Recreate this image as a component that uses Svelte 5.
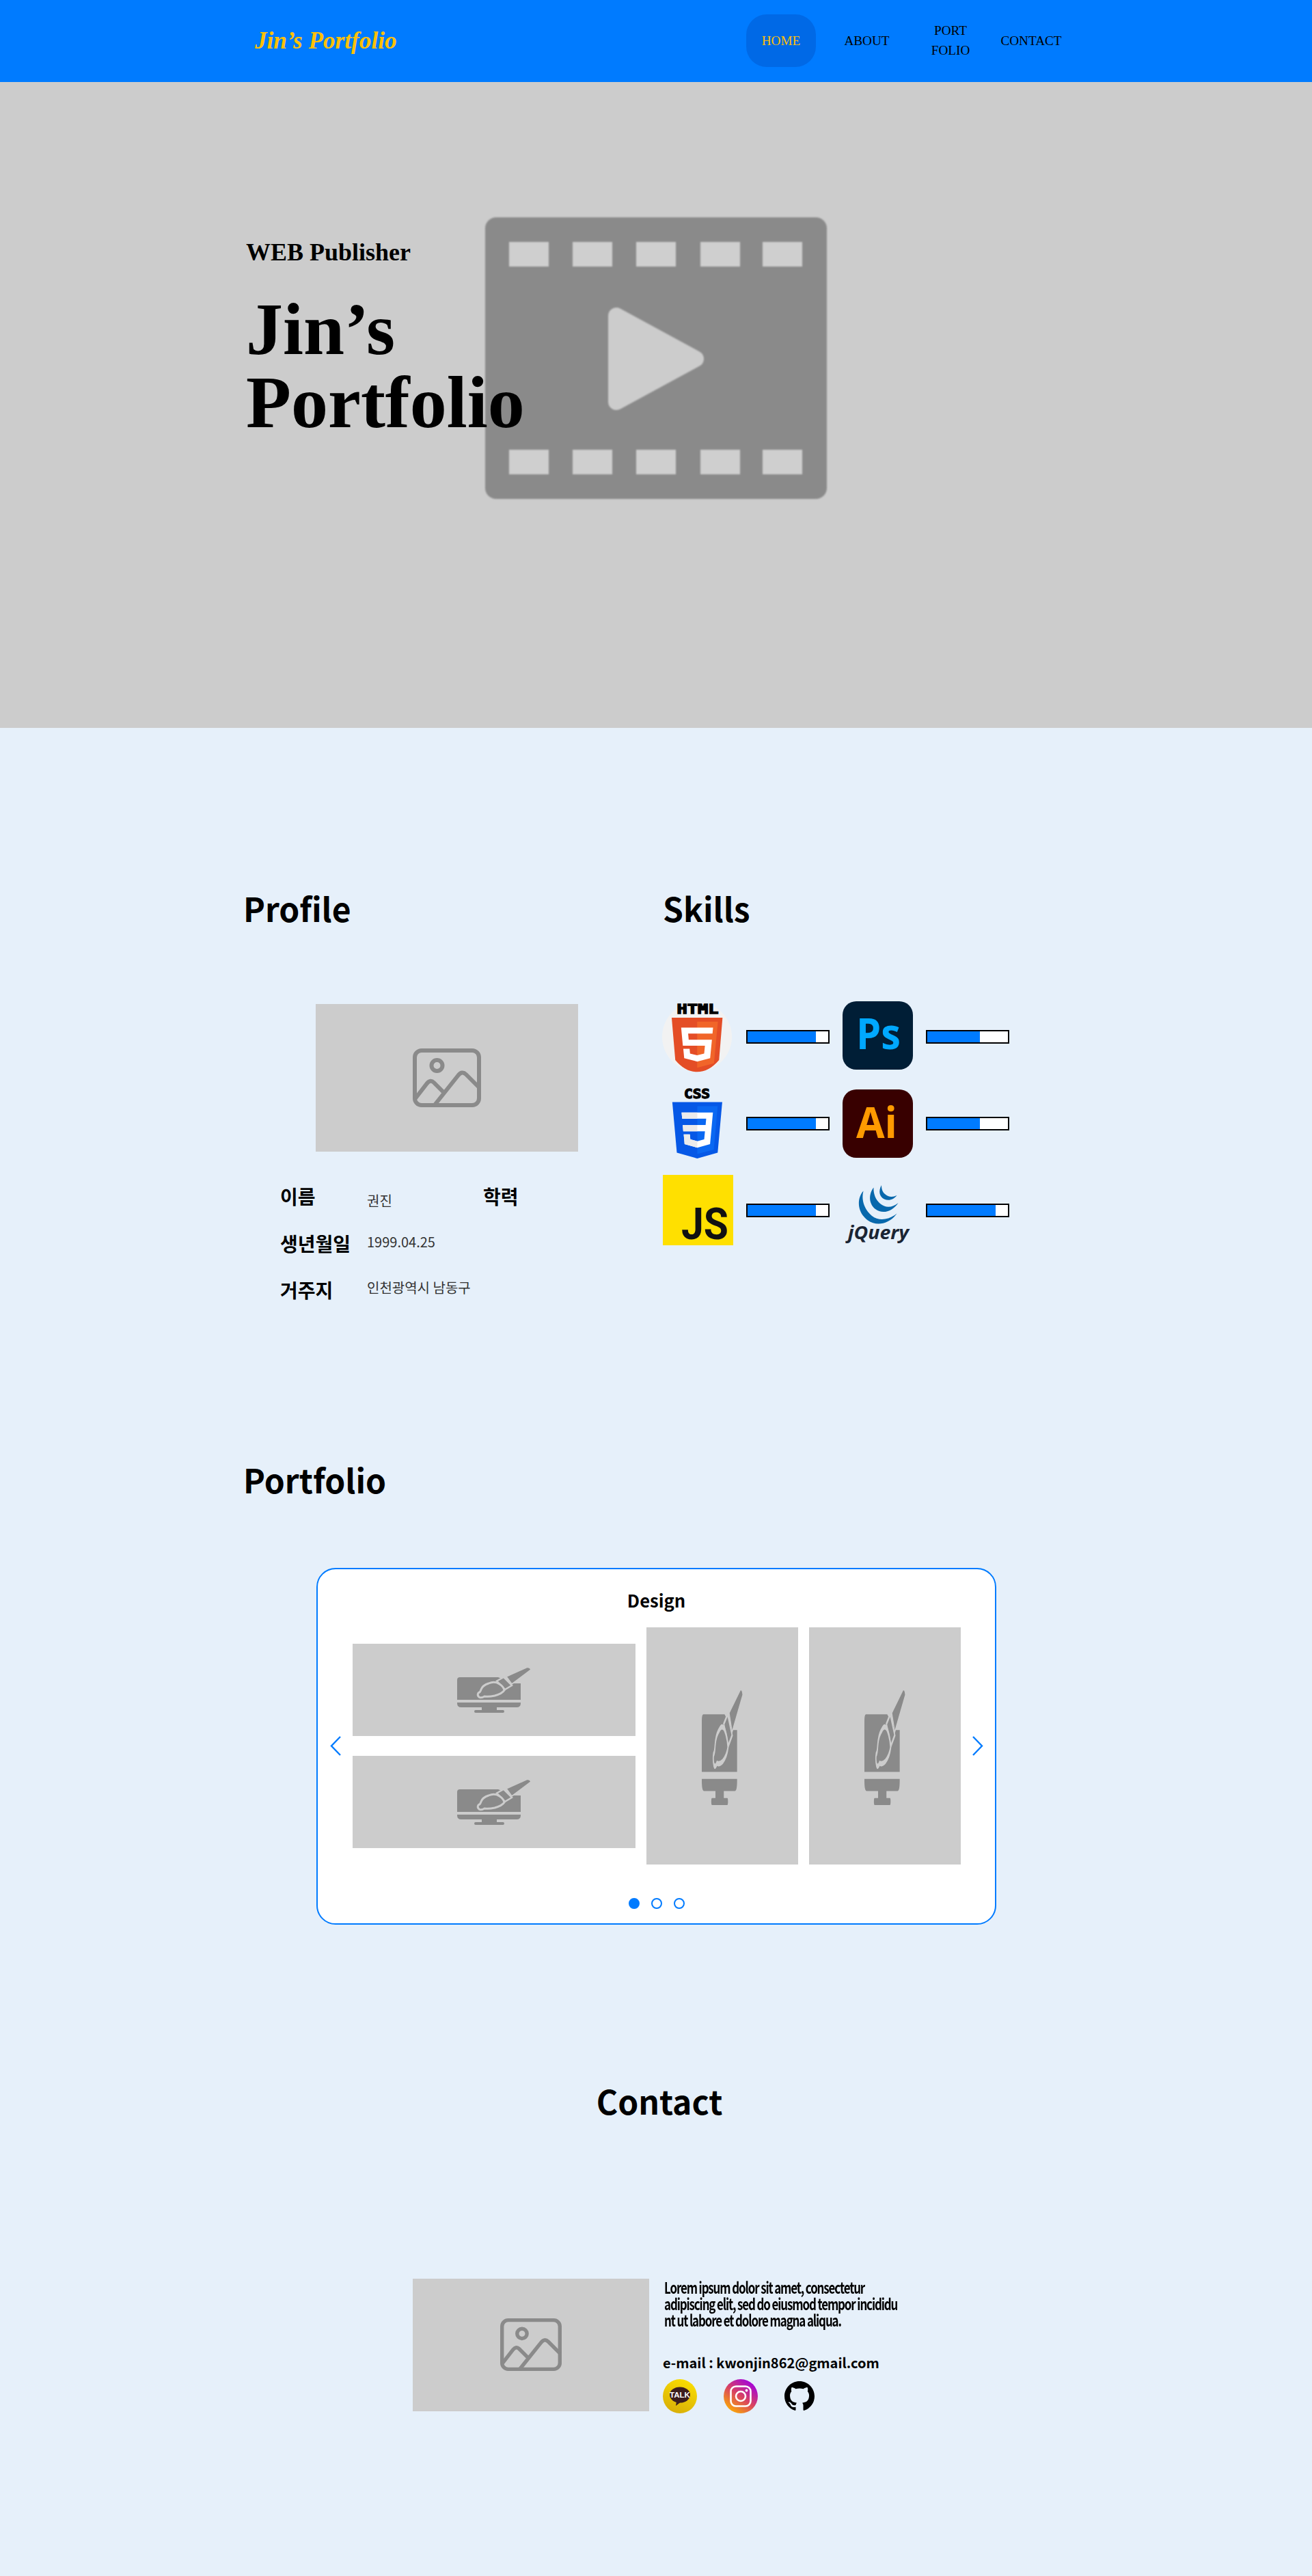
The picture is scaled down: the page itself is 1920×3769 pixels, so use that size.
<script>
  const profileRows = [
    { label: '이름', value: '권진', cls: 'first' },
    { label: '생년월일', value: '1999.04.25', cls: '' },
    { label: '거주지', value: '인천광역시 남동구', cls: 'last' }
  ];
</script>

{#snippet bar(pct)}
  <div class="bar"><div class="fill" style="width: {pct}%"></div></div>
{/snippet}

{#snippet picture(cls)}
  <svg class={cls} viewBox="0 0 100 86" preserveAspectRatio="none" fill="none" stroke="#8a8a8a" stroke-width="6">
    <rect x="3" y="3" width="94" height="80" rx="10" />
    <circle cx="35.5" cy="25" r="8" />
    <path d="M4 73 L21 51 Q26 45 31 50 L45 64" />
    <path d="M31 84 L66 40 Q72 32 78 38 L97 57" />
  </svg>
{/snippet}

{#snippet brush(cls)}
  <svg class={cls} viewBox="0 0 108 67" preserveAspectRatio="none">
    <path d="M4 15 H60 L82 24 H93 V48 H0 V19 Q0 15 4 15Z" fill="#8a8a8a" />
    <path d="M0 52 H93 V53 Q93 59 87 59 H58 V63 H67 Q69 63 69 65 Q69 67 67 67 H27 Q25 67 25 65 Q25 63 27 63 H36 V59 H6 Q0 59 0 53Z" fill="#8a8a8a" />
    <path d="M72 14 L102 0.5 Q107 0 108 4 L80 25Z" fill="#8a8a8a" stroke="#ccc" stroke-width="1.6" />
    <path d="M58 20.5 L68 15 L80 27 L70 33Z" fill="#8a8a8a" stroke="#ccc" stroke-width="2.4" />
    <path d="M32 44 Q29 41 31 38 Q34 37 35 33 Q37 27 46 24 Q55 20 62 25 Q68 29 69 34 Q66 39 55 42 Q46 44 40 43 Q35 46 32 44Z" fill="#8a8a8a" stroke="#ccc" stroke-width="3" />
  </svg>
{/snippet}

<div class="page">
  <header class="header">
    <a class="logo" href="#home">Jin’s Portfolio</a>
    <nav class="nav">
      <a class="active" href="#home">HOME</a>
      <a href="#about">ABOUT</a>
      <a href="#portfolio">PORT<br />FOLIO</a>
      <a href="#contact">CONTACT</a>
    </nav>
  </header>

  <section class="hero" id="home">
    <svg class="film" viewBox="0 0 500 412">
      <rect width="500" height="412" rx="16" fill="#8a8a8a" />
      <g fill="#cfcfcf">
        {#each [35, 128, 221, 315, 406] as x}
          <rect {x} y="36" width="58" height="36" />
          <rect {x} y="340" width="58" height="36" />
        {/each}
      </g>
      <polygon points="192,144 192,270 308,207" fill="#ccc" stroke="#ccc" stroke-width="24" stroke-linejoin="round" />
    </svg>
    <div class="hero-text">
      <p class="sub">WEB Publisher</p>
      <h1>Jin’s<br />Portfolio</h1>
    </div>
  </section>

  <main class="main">
    <div class="about" id="about">
      <section class="profile">
        <h2>Profile</h2>
        <div class="photo">{@render picture('pic-lg')}</div>
        <div class="info">
          {#each profileRows as row, i}
            <div class="key">{row.label}</div>
            <div class="val {row.cls}">{row.value}</div>
            <div class="key">{i === 0 ? '학력' : ''}</div>
          {/each}
        </div>
      </section>

      <section class="skills">
        <h2>Skills</h2>
        <div class="skill-grid">
          <svg class="logo-icon" viewBox="0 0 103 103">
            <circle cx="51" cy="52" r="51" fill="#f2f2f2" />
            <text x="52" y="18" class="pix" font-size="19" textLength="61" lengthAdjust="spacingAndGlyphs">HTML</text>
            <g transform="translate(9 24) scale(0.165 0.155)">
              <path d="M30 0 H481 L450 400 Q360 512 255 512 Q150 512 62 400Z" fill="#e44d26" />
              <path d="M256 472 L405 431 440 37 H256Z" fill="#f16529" />
              <path d="M256 94 H114 L129 265 H325 L318 338 256 355 193 338 189 293 H133 L141 382 256 414 371 382 387 208 H181 L176 150 H392 L397 94Z" fill="#fff" />
            </g>
          </svg>
          {@render bar(85)}
          <svg class="logo-icon" viewBox="0 0 103 103">
            <rect width="103" height="100" rx="20" fill="#001e36" />
            <text x="20" y="70" class="adobe" fill="#00a8ff" font-size="62" textLength="65" lengthAdjust="spacingAndGlyphs">Ps</text>
          </svg>
          {@render bar(65)}

          <svg class="logo-icon" viewBox="0 0 103 103">
            <text x="51" y="14.5" class="pix" font-size="19" textLength="38" lengthAdjust="spacingAndGlyphs">CSS</text>
            <g transform="translate(10 20.5) scale(0.162 0.161)">
              <path d="M30 0 H481 L440 460 255 512 71 460Z" fill="#0658e6" />
              <path d="M256 472 L405 431 440 37 H256Z" fill="#0a68f2" />
              <path d="M114 94 H397 L371 382 256 414 141 382 133 293 H189 L193 338 256 355 318 338 325 265 H129 L124 208 H331 L336 150 H119Z" fill="#fff" />
              <path d="M114 94 H256 V150 H119Z M124 208 H256 V265 H129Z M133 293 H189 L193 338 256 355 V414 L141 382Z" fill="#ebebeb" />
            </g>
          </svg>
          {@render bar(85)}
          <svg class="logo-icon" viewBox="0 0 103 103">
            <rect y="2" width="103" height="100" rx="20" fill="#380000" />
            <text x="20" y="73" class="adobe" fill="#ff9a00" font-size="62" textLength="60" lengthAdjust="spacingAndGlyphs">Ai</text>
          </svg>
          {@render bar(65)}

          <svg class="logo-icon" viewBox="0 0 103 103">
            <rect x="1" width="103" height="103" fill="#ffe000" />
            <text x="28" y="94" class="js" font-size="65" textLength="69" lengthAdjust="spacingAndGlyphs">JS</text>
          </svg>
          {@render bar(85)}
          <svg class="logo-icon" viewBox="0 0 103 103">
            <g fill="#0868ac">
              <path d="M30.5 23.5 C21 34 21 53 35 65 C48 76 68 73 79.5 56.5 C68 66 53 68 43 60 C32 51 27 37 30.5 23.5Z" />
              <path d="M45.5 18.5 C38 28 38 42 48 50 C58 58 73 54 81.5 41 C73 48 63 49 55 42 C48 36 45 27 45.5 18.5Z" />
              <path d="M57 15 C52 24 54 32 61 35.5 C68 38.5 75 36 79.5 30 C73 33 67 32.5 62 28 C58 24.5 57 20 57 15Z" />
            </g>
            <text x="8" y="94" class="jq" font-size="26" textLength="89" lengthAdjust="spacingAndGlyphs">jQuery</text>
          </svg>
          {@render bar(85)}
        </div>
      </section>
    </div>

    <section class="portfolio" id="portfolio">
      <h2>Portfolio</h2>
      <div class="card">
        <h3>Design</h3>
        <div class="slider">
          <svg class="arrow" viewBox="0 0 17 29" fill="none" stroke="#007bff" stroke-width="2.4"><path d="M15 1 L2 14.5 L15 28" /></svg>
          <div class="tiles">
            <div class="wide-col">
              <div class="tile wide">{@render brush('brush-wide')}</div>
              <div class="tile wide">{@render brush('brush-wide')}</div>
            </div>
            <div class="tile tall">{@render brush('brush-tall')}</div>
            <div class="tile tall">{@render brush('brush-tall')}</div>
          </div>
          <svg class="arrow" viewBox="0 0 17 29" fill="none" stroke="#007bff" stroke-width="2.4"><path d="M2 1 L15 14.5 L2 28" /></svg>
        </div>
        <div class="dots">
          <span class="dot on"></span>
          <span class="dot"></span>
          <span class="dot"></span>
        </div>
      </div>
    </section>

    <section class="contact" id="contact">
      <h2>Contact</h2>
      <div class="contact-row">
        <div class="contact-pic">{@render picture('pic-md')}</div>
        <div class="contact-text">
          <p class="lorem">Lorem ipsum dolor sit amet, consectetur<br />adipiscing elit, sed do eiusmod tempor incididu<br />nt ut labore et dolore magna aliqua.</p>
          <p class="mail">e-mail : kwonjin862@gmail.com</p>
          <div class="social">
            <svg class="sns" viewBox="0 0 50 50">
              <defs>
                <linearGradient id="kk" x1="0.7" y1="0" x2="0.3" y2="1"><stop offset="0" stop-color="#fade00" /><stop offset="1" stop-color="#d8ae08" /></linearGradient>
              </defs>
              <circle cx="25" cy="25" r="25" fill="url(#kk)" />
              <ellipse cx="25" cy="23" rx="15" ry="11.5" fill="#3c1e1e" />
              <path d="M20 32 L19 39 L27 33Z" fill="#3c1e1e" />
              <text x="25" y="27" class="talk" font-size="11.5">TALK</text>
            </svg>
            <svg class="sns" viewBox="0 0 50 50">
              <defs>
                <linearGradient id="ig" x1="0.15" y1="0.95" x2="0.8" y2="0.05"><stop offset="0" stop-color="#fdb000" /><stop offset="0.5" stop-color="#d9455f" /><stop offset="1" stop-color="#a100e0" /></linearGradient>
              </defs>
              <circle cx="25" cy="25" r="25" fill="url(#ig)" />
              <rect x="10.5" y="10.5" width="29" height="29" rx="7.5" fill="none" stroke="#fff" stroke-width="2.6" />
              <circle cx="25" cy="25" r="7" fill="none" stroke="#fff" stroke-width="2.6" />
              <circle cx="33.5" cy="16.5" r="1.9" fill="#fff" />
            </svg>
            <svg class="gh" viewBox="0 0 16 16">
              <path fill="#000" d="M8 0C3.58 0 0 3.58 0 8c0 3.54 2.29 6.53 5.47 7.59.4.07.55-.17.55-.38 0-.19-.01-.82-.01-1.49-2.01.37-2.53-.49-2.69-.94-.09-.23-.48-.94-.82-1.13-.28-.15-.68-.52-.01-.53.63-.01 1.08.58 1.23.82.72 1.21 1.87.87 2.33.66.07-.52.28-.87.51-1.07-1.78-.2-3.64-.89-3.64-3.95 0-.87.31-1.59.82-2.15-.08-.2-.36-1.02.08-2.12 0 0 .67-.21 2.2.82.64-.18 1.32-.27 2-.27.68 0 1.36.09 2 .27 1.53-1.04 2.2-.82 2.2-.82.44 1.1.16 1.92.08 2.12.51.56.82 1.27.82 2.15 0 3.07-1.87 3.75-3.65 3.95.29.25.54.73.54 1.48 0 1.07-.01 1.93-.01 2.2 0 .21.15.46.55.38A8.013 8.013 0 0016 8c0-4.42-3.58-8-8-8z" />
            </svg>
          </div>
        </div>
      </div>
    </section>
  </main>
</div>

<style>
  :global(body) {
    margin: 0;
    background: #e6f0fa;
  }

  .page {
    font-family: "Noto Sans CJK KR", "Noto Sans", sans-serif;
    color: #000;
  }

  a {
    color: inherit;
    text-decoration: none;
  }

  .header {
    height: 120px;
    background: #007bff;
    display: flex;
    align-items: center;
    padding-left: 373px;
    font-family: "Liberation Serif", serif;
  }

  .logo {
    width: 207px;
    font-size: 35.2px;
    font-weight: 700;
    font-style: italic;
    color: #ffc107;
    white-space: nowrap;
  }

  .nav {
    display: grid;
    grid-template-columns: 102px 149px 96px 140px;
    margin-left: 512px;
    font-size: 19.2px;
    line-height: 29px;
    text-align: center;
    align-items: center;
    position: relative;
    top: -1px;
  }

  .nav .active {
    height: 77px;
    line-height: 77px;
    background: #0069e6;
    border-radius: 30px;
    color: #ffc107;
  }

  .hero {
    position: relative;
    height: 945px;
    background: #ccc;
    padding-left: 360px;
    box-sizing: border-box;
    font-family: "Liberation Serif", serif;
  }

  .film {
    position: absolute;
    left: 710px;
    top: 198px;
    width: 500px;
    height: 412px;
    filter: blur(1.2px);
  }

  .hero-text {
    position: relative;
    padding-top: 225px;
  }

  .sub {
    margin: 0;
    font-size: 36px;
    font-weight: 700;
    line-height: 48px;
  }

  h1 {
    margin: 35px 0 0;
    font-size: 108px;
    line-height: 107px;
    font-weight: 700;
  }

  .main {
    padding: 0 0 240px 360px;
  }

  h2 {
    margin: 0;
    font-size: 48px;
    line-height: 72px;
    font-weight: 700;
  }

  .about {
    display: grid;
    grid-template-columns: 609px 1fr;
    padding-top: 227px;
  }

  .profile h2,
  .portfolio h2 {
    margin-left: -4px;
  }

  .photo {
    width: 384px;
    height: 216px;
    margin: 105px 0 0 102px;
    background: #ccc;
    display: flex;
    align-items: center;
    justify-content: center;
  }

  .pic-lg {
    width: 100px;
    height: 86px;
  }

  .info {
    display: grid;
    grid-template-columns: 127px 170px auto;
    grid-auto-rows: 68.5px;
    margin: 45px 0 0 50px;
  }

  .key {
    font-size: 28px;
    font-weight: 700;
    line-height: 40px;
  }

  .val {
    font-size: 20px;
    line-height: 28px;
    color: #333;
    padding-top: 4px;
  }

  .val.first {
    padding-top: 13px;
  }

  .val.last {
    padding-top: 3px;
  }

  .skills h2 {
    padding-left: 1px;
  }

  .skill-grid {
    display: grid;
    grid-template-columns: 104px 122px 103px 122px;
    grid-auto-rows: 103px;
    column-gap: 19px;
    row-gap: 24px;
    align-items: center;
    margin-top: 101px;
  }

  .logo-icon {
    display: block;
    width: 103px;
    height: 103px;
    overflow: visible;
  }

  .pix {
    font-family: "DejaVu Sans Mono", monospace;
    font-weight: 700;
    text-anchor: middle;
    fill: #000;
    stroke: #000;
    stroke-width: 1.3;
  }

  .adobe {
    font-family: "Open Sans", sans-serif;
    font-weight: 700;
  }

  .js {
    font-family: "Roboto", sans-serif;
    font-weight: 700;
    fill: #111;
  }

  .jq {
    font-family: "Open Sans", sans-serif;
    font-weight: 700;
    font-style: italic;
    fill: #1a2433;
  }

  .talk {
    font-family: "Liberation Sans", sans-serif;
    font-weight: 700;
    fill: #fff;
    text-anchor: middle;
  }

  .bar {
    height: 20px;
    box-sizing: border-box;
    border: 2px solid #000;
    background: #fff;
  }

  .fill {
    height: 100%;
    background: #007bff;
  }

  .portfolio {
    padding-top: 192px;
  }

  .card {
    width: 995px;
    height: 522px;
    box-sizing: border-box;
    margin: 94px 0 0 103px;
    border: 2px solid #007bff;
    border-radius: 28px;
    background: #fff;
    display: flex;
    flex-direction: column;
    align-items: center;
  }

  h3 {
    margin: 24px 0 0;
    font-size: 25.6px;
    line-height: 42px;
    font-weight: 700;
  }

  .slider {
    display: flex;
    align-items: center;
    gap: 16px;
    margin-top: 19px;
  }

  .arrow {
    width: 17px;
    height: 29px;
  }

  .tiles {
    display: flex;
    align-items: center;
    gap: 16px;
  }

  .wide-col {
    display: flex;
    flex-direction: column;
    gap: 29px;
  }

  .tile {
    background: #ccc;
    display: flex;
    align-items: center;
    justify-content: center;
  }

  .tile.wide {
    width: 414px;
    height: 135px;
  }

  .tile.tall {
    width: 222px;
    height: 347px;
  }

  .brush-wide {
    width: 108px;
    height: 67px;
  }

  .brush-tall {
    width: 60px;
    height: 171px;
    margin-top: 2px;
  }

  .dots {
    display: flex;
    gap: 17px;
    margin-top: 49px;
  }

  .dot {
    width: 16px;
    height: 16px;
    box-sizing: border-box;
    border: 2px solid #007bff;
    border-radius: 50%;
    background: #fff;
  }

  .dot.on {
    background: #007bff;
  }

  .contact {
    padding-top: 221px;
  }

  .contact h2 {
    width: 1210px;
    text-align: center;
  }

  .contact-row {
    display: flex;
    gap: 20px;
    margin: 225px 0 0 244px;
  }

  .contact-pic {
    width: 346px;
    height: 194px;
    background: #ccc;
    display: flex;
    align-items: center;
    justify-content: center;
  }

  .pic-md {
    width: 90px;
    height: 77px;
  }

  .contact-text {
    width: 350px;
  }

  .lorem {
    margin: 0 0 0 2px;
    width: 465px;
    font-size: 23px;
    line-height: 24px;
    font-weight: 700;
    letter-spacing: -1.5px;
    white-space: nowrap;
    transform: scaleX(0.735);
    transform-origin: left top;
  }

  .mail {
    margin: 34px 0 0;
    font-size: 20px;
    line-height: 33px;
    font-weight: 700;
    white-space: nowrap;
  }

  .social {
    display: flex;
    align-items: center;
    margin-top: 8px;
  }

  .sns {
    width: 50px;
    height: 50px;
    margin-right: 39px;
  }

  .gh {
    width: 44px;
    height: 44px;
  }
</style>
